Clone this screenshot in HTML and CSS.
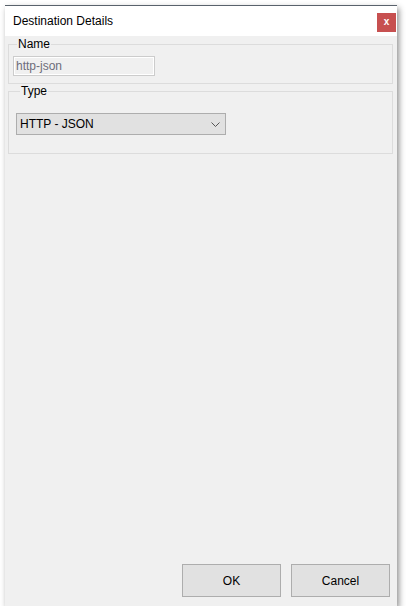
FILE: index.html
```html
<!DOCTYPE html>
<html>
<head>
<meta charset="utf-8">
<link rel="stylesheet" href="styles.css">
</head>
<body>
<div class="window">
  <div class="titlebar">
    <span class="title">Destination Details</span>
    <button class="close" type="button">x</button>
  </div>
  <div class="content">
    <fieldset class="group group-name">
      <legend>Name</legend>
      <div class="textbox">http-json</div>
    </fieldset>
    <fieldset class="group group-type">
      <legend>Type</legend>
      <div class="combo">
        <span>HTTP - JSON</span>
        <svg class="chev" width="9" height="5" viewBox="0 0 9 5"><path d="M0.5 0.5 L4.5 4.5 L8.5 0.5" fill="none" stroke="#555" stroke-width="1"/></svg>
      </div>
    </fieldset>
    <div class="spacer"></div>
    <div class="buttons">
      <button class="btn" type="button">OK</button>
      <button class="btn" type="button">Cancel</button>
    </div>
  </div>
</div>
</body>
</html>
```
FILE: styles.css
```css
html, body {
  margin: 0;
  padding: 0;
  background: #ffffff;
  font-family: "Liberation Sans", Arial, sans-serif;
  font-size: 12px;
  color: #000;
}
.window {
  margin: 5px 0 0 5px;
  width: 392px;
  height: 601px;
  display: flex;
  flex-direction: column;
  border-top: 1px solid #59626c;
  box-shadow: 2px 3px 6px rgba(0,0,0,0.45);
  box-sizing: border-box;
}
.titlebar {
  height: 30px;
  background: #ffffff;
  display: flex;
  align-items: center;
  justify-content: space-between;
  padding-left: 8px;
  padding-right: 1px;
}
.title {
  font-size: 12px;
  color: #000;
  margin-top: -1px;
}
.close {
  width: 19px;
  height: 19px;
  margin-top: 2px;
  border: none;
  padding: 0 0 2px 0;
  background: #c75050;
  color: #fff;
  font-family: "Liberation Sans", Arial, sans-serif;
  font-weight: bold;
  font-size: 10px;
  line-height: 17px;
}
.content {
  flex: 1;
  background: #f0f0f0;
  display: flex;
  flex-direction: column;
  padding: 1px 4px 9px 3px;
}
.group {
  margin: 0;
  border: 1px solid #dcdcdc;
  padding: 0;
  min-width: 0;
}
.group legend {
  padding: 0 1px;
  margin-left: 4px;
  font-size: 12px;
  line-height: 14px;
  color: #000;
}
.group-name {
  height: 47px;
  box-sizing: border-box;
  padding: 5px 0 0 4px;
}
.textbox {
  width: 142px;
  height: 20px;
  box-sizing: border-box;
  border: 1px solid #cccccc;
  box-shadow: inset 0 0 0 1px #ffffff;
  background: #f0f0f0;
  color: #6d6d7a;
  padding: 2px 0 0 2px;
  line-height: 14px;
}
.group-type {
  margin-top: 0;
  height: 70px;
  box-sizing: border-box;
  padding: 15px 0 0 7px;
}
.combo {
  width: 210px;
  height: 22px;
  box-sizing: border-box;
  background: #e1e1e1;
  border: 1px solid #adadad;
  display: flex;
  align-items: center;
  justify-content: space-between;
  padding: 0 5px 0 3px;
  font-size: 12px;
}
.spacer {
  flex: 1;
}
.buttons {
  display: flex;
  justify-content: flex-end;
  gap: 10px;
  margin-right: 3px;
}
.btn {
  width: 99px;
  height: 33px;
  box-sizing: border-box;
  background: #e1e1e1;
  border: 1px solid #adadad;
  font-family: "Liberation Sans", Arial, sans-serif;
  font-size: 12px;
  color: #000;
  padding: 0;
}
```
